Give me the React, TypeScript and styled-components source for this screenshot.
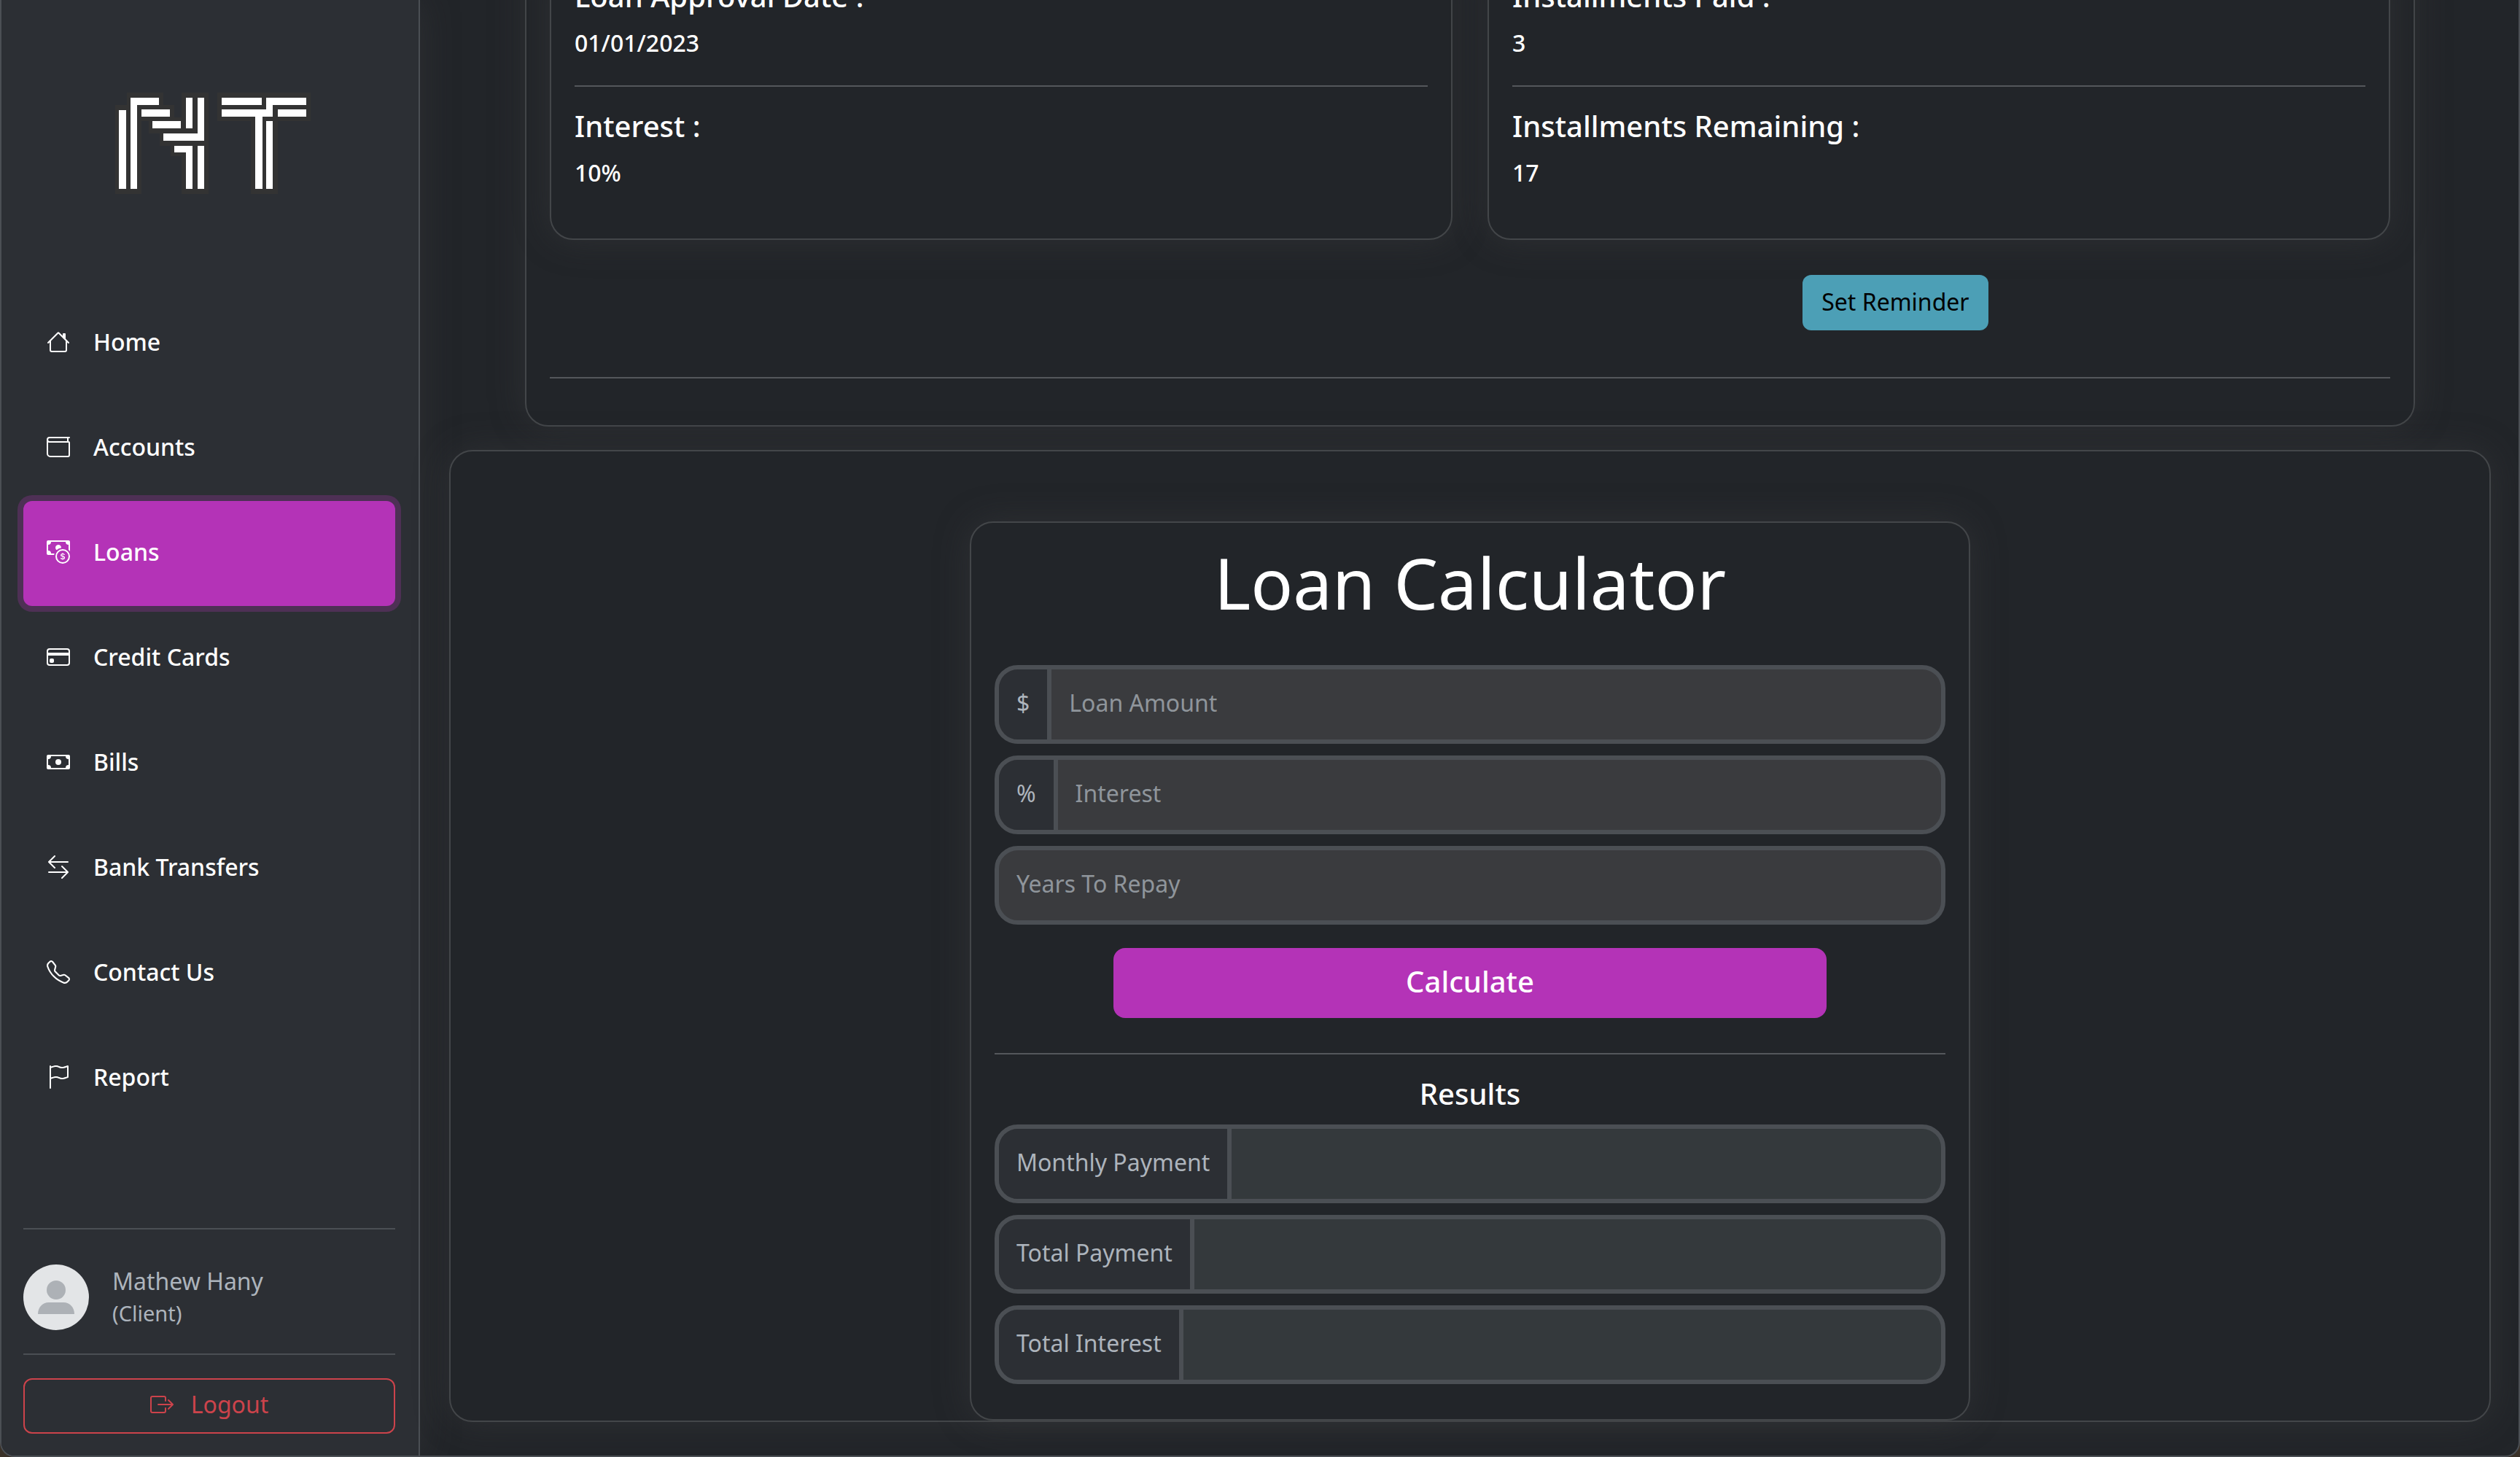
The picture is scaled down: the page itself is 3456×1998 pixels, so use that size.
import React from "react";
import styled, { createGlobalStyle } from "styled-components";
import {
  BsArrowLeftRight,
  BsBoxArrowRight,
  BsCash,
  BsCashCoin,
  BsCreditCard,
  BsFlag,
  BsHouse,
  BsTelephone,
  BsWallet,
} from "react-icons/bs";

const color = {
  desktop: "#3a3128",
  body: "#222529",
  panel: "#2c2f34",
  border: "#4b4f54",
  cardBorder: "#434649",
  rule: "#54575b",
  text: "#ffffff",
  muted: "#adb4bc",
  placeholder: "#8f959b",
  accent: "#b433b7",
  danger: "#cc434b",
  info: "#4c9fb6",
};

const glow = "0 0 48px rgba(64, 66, 68, 0.4)";

const GlobalStyle = createGlobalStyle`
  *, *::before, *::after { box-sizing: border-box; }
  body {
    margin: 0;
    background: ${color.desktop};
    color: ${color.text};
    font-family: "Noto Sans", "Open Sans", sans-serif;
    font-size: 32px;
    font-weight: 400;
    line-height: 48px;
  }
  h1, h2, h3, p { margin: 0; font-weight: 400; }
  button, input { font: inherit; }
`;

const Shell = styled.div`
  display: flex;
  height: 100vh;
  overflow: hidden;
  border: solid ${color.border};
  border-width: 0 2px 2px 2px;
  border-radius: 0 0 20px 20px;
  background: ${color.body};
`;

const Sidebar = styled.aside`
  flex: 0 0 574px;
  display: flex;
  flex-direction: column;
  padding: 0 32px 30px 30px;
  background: ${color.panel};
  border-right: 2px solid ${color.border};
  box-shadow: ${glow};
`;

const Brand = styled.a`
  display: flex;
  justify-content: center;
  padding: 127px 0 132px 10px;
`;

const NavList = styled.ul`
  list-style: none;
  margin: 0;
  padding: 0;
  flex: 1;
`;

const NavLink = styled.a<{ $active?: boolean }>`
  display: flex;
  align-items: center;
  gap: 32px;
  height: 144px;
  padding: 0 32px 4px;
  border-radius: 12px;
  color: ${color.text};
  font-weight: 500;
  text-decoration: none;
  background: ${(p) => (p.$active ? color.accent : "transparent")};
  box-shadow: ${(p) => (p.$active ? "0 0 0 8px rgba(180, 51, 183, 0.25)" : "none")};
`;

const Rule = styled.hr<{ $tone?: string; $space?: string }>`
  width: 100%;
  height: 2px;
  border: 0;
  margin: ${(p) => p.$space ?? "32px 0"};
  background: ${(p) => p.$tone ?? color.rule};
`;

const Profile = styled.div`
  display: flex;
  align-items: center;
  gap: 32px;
  height: 106px;
  color: ${color.muted};
`;

const UserName = styled.p`
  line-height: 44px;
`;

const UserRole = styled.p`
  font-size: 29px;
  line-height: 44px;
`;

const LogoutButton = styled.button`
  display: flex;
  align-items: center;
  justify-content: center;
  gap: 24px;
  width: 100%;
  height: 76px;
  padding: 0 0 4px;
  border: 2px solid ${color.danger};
  border-radius: 12px;
  background: transparent;
  color: ${color.danger};
`;

const Main = styled.main`
  flex: 1;
  min-width: 0;
  display: flex;
  flex-direction: column;
  justify-content: flex-end;
  align-items: center;
  gap: 32px;
  padding: 0 38px 46px 40px;
`;

const Card = styled.section`
  border: 2px solid ${color.cardBorder};
  border-radius: 32px;
  background: ${color.body};
  box-shadow: ${glow};
  padding: 32px;
`;

const LoanCard = styled(Card)`
  width: calc(100% - 208px);
`;

const DetailGrid = styled.div`
  display: grid;
  grid-template-columns: 1fr 1fr;
  gap: 48px;
`;

const DetailCard = styled(Card)`
  padding-bottom: 64px;
`;

const DetailTitle = styled.h3`
  margin-bottom: 18px;
  font-size: 40px;
  font-weight: 500;
  line-height: 44px;
`;

const DetailValue = styled.p`
  padding-bottom: 2px;
  font-weight: 500;
`;

const Reminder = styled.div`
  display: flex;
  justify-content: space-around;
  margin: 48px 0 64px;
`;

const ReminderStatus = styled.span`
  width: 64px;
`;

const ReminderButton = styled.button`
  height: 76px;
  padding: 0 26px 2px;
  border: 0;
  border-radius: 12px;
  background: ${color.info};
  color: #000;
`;

const CalculatorPanel = styled(Card)`
  width: 100%;
  padding: 96px 0 0;
`;

const Calculator = styled(Card)`
  width: calc(49% + 2px);
  margin: 0 auto;
  padding-bottom: 48px;
`;

const CalculatorTitle = styled.h1`
  margin-bottom: 64px;
  font-size: 96px;
  line-height: 99px;
  text-align: center;
`;

const FieldStack = styled.div`
  display: flex;
  flex-direction: column;
  gap: 16px;
`;

const Field = styled.div<{ $readOnly?: boolean }>`
  display: flex;
  height: 108px;
  overflow: hidden;
  border: 6px solid ${color.border};
  border-radius: 32px;
  background: ${(p) => (p.$readOnly ? "#34393c" : "#3a3b3e")};
`;

const FieldLabel = styled.label`
  display: flex;
  align-items: center;
  padding: 0 24px 4px;
  border-right: 6px solid ${color.border};
  background: ${color.panel};
  color: ${color.muted};
  white-space: nowrap;
`;

const FieldInput = styled.input`
  flex: 1;
  min-width: 0;
  padding: 0 24px 4px;
  border: 0;
  outline: 0;
  background: transparent;
  color: ${color.text};
  &::placeholder { color: ${color.placeholder}; opacity: 1; }
`;

const CalculateButton = styled.button`
  display: block;
  width: 75%;
  height: 96px;
  margin: 32px auto 0;
  padding: 0 0 4px;
  border: 0;
  border-radius: 16px;
  background: ${color.accent};
  color: ${color.text};
  font-size: 40px;
  font-weight: 500;
`;

const ResultsTitle = styled.h2`
  margin-bottom: 20px;
  font-size: 40px;
  font-weight: 500;
  line-height: 44px;
  text-align: center;
`;

const Logo = () => (
  <svg width="268" height="140" viewBox="0 0 268 140" role="img" aria-label="NT">
    <path
      fill="#333333"
      d="M0 17h16V0h50v17h15v17h10V0h37v139H91V87H76V73H61V56H46V39H36v100H0zM140 0h128v39h-45v100h-37V39h-46z"
    />
    <g fill="#ffffff">
      <path d="M5 24h10v108H5zM21 7h39v10H30v115h-9zM36 23h39v10H36zM51 39h39v10H51zM97 7h9v42h-9zM113 7h9v59H66V56h47zM81 73h25v59h-9V82H81zM113 73h9v59h-9z" />
      <path d="M146 7h55v10h-55zM207 7h55v10h-46v16h-14v99h-10V33h-46V23h61zM223 23h39v10h-39zM207 39h9v93h-9z" />
    </g>
  </svg>
);

const Avatar = () => (
  <svg width="90" height="90" viewBox="0 0 90 90" aria-hidden="true">
    <circle cx="45" cy="45" r="45" fill="#e3e5e7" />
    <circle cx="45" cy="35" r="13" fill="#adb1b6" />
    <path d="M20 68c0-9 6-16 15-16h20c9 0 15 7 15 16z" fill="#adb1b6" />
  </svg>
);

const navItems = [
  { label: "Home", Icon: BsHouse },
  { label: "Accounts", Icon: BsWallet },
  { label: "Loans", Icon: BsCashCoin, active: true },
  { label: "Credit Cards", Icon: BsCreditCard },
  { label: "Bills", Icon: BsCash },
  { label: "Bank Transfers", Icon: BsArrowLeftRight },
  { label: "Contact Us", Icon: BsTelephone },
  { label: "Report", Icon: BsFlag },
];

const details = [
  [
    { title: "Loan Approval Date :", value: "01/01/2023" },
    { title: "Interest :", value: "10%" },
  ],
  [
    { title: "Installments Paid :", value: "3" },
    { title: "Installments Remaining :", value: "17" },
  ],
];

const inputs = [
  { id: "amount", sign: "$", placeholder: "Loan Amount" },
  { id: "interest", sign: "%", placeholder: "Interest" },
  { id: "years", sign: "", placeholder: "Years To Repay" },
];

const results = [
  { id: "monthly-payment", label: "Monthly Payment" },
  { id: "total-payment", label: "Total Payment" },
  { id: "total-interest", label: "Total Interest" },
];

export default function App() {
  return (
    <>
      <GlobalStyle />
      <Shell>
        <Sidebar>
          <Brand href="#home">
            <Logo />
          </Brand>
          <NavList>
            {navItems.map(({ label, Icon, active }) => (
              <li key={label}>
                <NavLink href="#" $active={active} aria-current={active ? "page" : undefined}>
                  <Icon size={32} />
                  {label}
                </NavLink>
              </li>
            ))}
          </NavList>
          <Rule $tone={color.border} $space="0 0 40px" />
          <Profile>
            <Avatar />
            <div>
              <UserName>Mathew Hany</UserName>
              <UserRole>(Client)</UserRole>
            </div>
          </Profile>
          <Rule $tone={color.border} $space="24px 0 32px" />
          <LogoutButton type="button">
            <BsBoxArrowRight size={32} />
            Logout
          </LogoutButton>
        </Sidebar>
        <Main>
          <LoanCard>
            <DetailGrid>
              {details.map((group, index) => (
                <DetailCard key={index} as="div">
                  {group.map((item, row) => (
                    <React.Fragment key={item.title}>
                      {row > 0 && <Rule />}
                      <DetailTitle>{item.title}</DetailTitle>
                      <DetailValue>{item.value}</DetailValue>
                    </React.Fragment>
                  ))}
                </DetailCard>
              ))}
            </DetailGrid>
            <Reminder>
              <ReminderStatus />
              <ReminderButton type="button">Set Reminder</ReminderButton>
            </Reminder>
            <Rule />
          </LoanCard>
          <CalculatorPanel>
            <Calculator as="form">
              <CalculatorTitle>Loan Calculator</CalculatorTitle>
              <FieldStack>
                {inputs.map(({ id, sign, placeholder }) => (
                  <Field key={id}>
                    {sign && <FieldLabel htmlFor={id}>{sign}</FieldLabel>}
                    <FieldInput id={id} placeholder={placeholder} aria-label={placeholder} />
                  </Field>
                ))}
              </FieldStack>
              <CalculateButton type="button">Calculate</CalculateButton>
              <Rule $space="48px 0 32px" />
              <ResultsTitle>Results</ResultsTitle>
              <FieldStack>
                {results.map(({ id, label }) => (
                  <Field key={id} $readOnly>
                    <FieldLabel htmlFor={id}>{label}</FieldLabel>
                    <FieldInput id={id} readOnly />
                  </Field>
                ))}
              </FieldStack>
            </Calculator>
          </CalculatorPanel>
        </Main>
      </Shell>
    </>
  );
}
